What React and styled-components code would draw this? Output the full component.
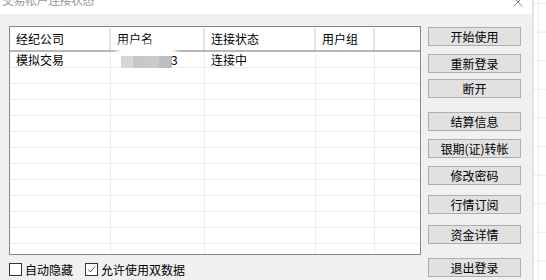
import styled, { createGlobalStyle } from "styled-components";

const GlobalStyle = createGlobalStyle`
  html, body {
    margin: 0;
    padding: 0;
    width: 546px;
    height: 280px;
    overflow: hidden;
    background-color: #ffffff;
    background-image:
      linear-gradient(to right, transparent 538px, #ebebeb 538px, #ebebeb 539px, transparent 539px),
      linear-gradient(to bottom, #ebebeb 1px, transparent 1px);
    background-size: 100% 100%, 100% 28.6px;
    background-position: 0 0, 0 3px;
    font-family: "Noto Sans CJK SC", "Microsoft YaHei", sans-serif;
    font-size: 12px;
    color: #000;
  }
`;

const Window = styled.div`
  width: 532px;
  height: 280px;
  background: #f0f0f0;
  border-right: 2px solid #e4e4e4;
  display: flex;
  flex-direction: column;
  overflow: hidden;
`;

const TitleBar = styled.div`
  height: 14px;
  background: #ffffff;
  display: flex;
  justify-content: space-between;
  align-items: flex-start;
  overflow: hidden;
  flex-shrink: 0;
`;

const Title = styled.span`
  margin-top: -8px;
  margin-left: 2px;
  font-size: 12px;
  line-height: 16px;
  color: #9a9a9a;
  letter-spacing: -0.5px;
`;

const CloseIcon = styled.svg`
  margin-top: -3px;
  margin-right: 9px;
`;

const Body = styled.div`
  display: flex;
  flex: 1;
`;

const LeftPane = styled.div`
  display: flex;
  flex-direction: column;
  padding: 12px 0 0 9px;
`;

const ListBox = styled.div`
  width: 410px;
  height: 227px;
  border: 1px solid #828790;
  background: #fff;
  overflow: hidden;
`;

const HeaderRow = styled.div`
  display: flex;
  height: 22px;
  margin-top: 1px;
  border-bottom: 2px solid #b8b8b8;
`;

const HeaderCell = styled.div`
  width: ${(p) => p.$w}px;
  flex-shrink: 0;
  box-sizing: border-box;
  padding-left: 6px;
  line-height: 22px;
  border-right: 2px solid ${(p) => (p.$last ? "transparent" : "#e3e3e3")};
  white-space: nowrap;
`;

const Row = styled.div`
  display: flex;
  height: 16px;
  border-bottom: 1px solid #ececec;
  box-sizing: border-box;
`;

const Cell = styled.div`
  width: ${(p) => p.$w}px;
  flex-shrink: 0;
  box-sizing: border-box;
  padding-left: 6px;
  line-height: 16px;
  border-right: 1px solid ${(p) => (p.$last ? "transparent" : "#ececec")};
  white-space: nowrap;
  display: flex;
  align-items: center;
`;

const Mosaic = styled.span`
  display: inline-flex;
  align-items: flex-end;
  margin-left: 4px;
  height: 16px;
  background: #fff;
  box-shadow: 0 -4px 6px 4px #ffffff;
`;

const Tile = styled.span`
  width: ${(p) => p.$w}px;
  height: 12px;
  margin-top: 4px;
  background: ${(p) => p.$c};
`;

const CheckRow = styled.div`
  display: flex;
  align-items: center;
  margin-top: 8px;
  height: 13px;
`;

const CheckItem = styled.label`
  display: flex;
  align-items: center;
  margin-right: ${(p) => p.$gap || 0}px;
  line-height: 13px;
`;

const Box = styled.span`
  width: 11px;
  height: 11px;
  border: 1px solid #333;
  background: #fff;
  margin-right: 3px;
  display: flex;
  align-items: center;
  justify-content: center;
`;

const ButtonColumn = styled.div`
  display: flex;
  flex-direction: column;
  padding: 13px 0 0 7px;
`;

const Button = styled.button`
  width: 93px;
  height: 19px;
  margin: ${(p) => p.$gap}px 0 0 0;
  padding: 0;
  background: #e1e1e1;
  border: 1px solid #adadad;
  border-radius: 0;
  font-family: "Noto Sans CJK SC", "Microsoft YaHei", sans-serif;
  font-size: 12px;
  line-height: 17px;
  color: #000;
`;

const columns = [
  { title: "经纪公司", w: 101 },
  { title: "用户名", w: 94 },
  { title: "连接状态", w: 111 },
  { title: "用户组", w: 59 },
  { title: "", w: 45, last: true },
];

const buttons = [
  { label: "开始使用", gap: 0 },
  { label: "重新登录", gap: 8 },
  { label: "断开", gap: 6 },
  { label: "结算信息", gap: 14 },
  { label: "银期(证)转帐", gap: 8 },
  { label: "修改密码", gap: 8 },
  { label: "行情订阅", gap: 10 },
  { label: "资金详情", gap: 11 },
  { label: "退出登录", gap: 14 },
];

const tiles = [
  { w: 12, c: "#d6d6d6" },
  { w: 11, c: "#c6c6c6" },
  { w: 15, c: "#cacaca" },
  { w: 13, c: "#bebebe" },
];

export default function App() {
  const emptyRows = Array.from({ length: 12 });

  return (
    <>
      <GlobalStyle />
      <Window>
        <TitleBar>
          <Title>交易帐户连接状态</Title>
          <CloseIcon width="10" height="10" viewBox="0 0 10 10">
            <path d="M0.5 0.5 L9.5 9.5 M9.5 0.5 L0.5 9.5" stroke="#8a8a8a" strokeWidth="1" />
          </CloseIcon>
        </TitleBar>
        <Body>
          <LeftPane>
            <ListBox>
              <HeaderRow>
                {columns.map((c, i) => (
                  <HeaderCell key={i} $w={c.w} $last={c.last}>
                    {c.title}
                  </HeaderCell>
                ))}
              </HeaderRow>
              <Row>
                <Cell $w={101}>模拟交易</Cell>
                <Cell $w={94}>
                  <Mosaic>
                    {tiles.map((t, i) => (
                      <Tile key={i} $w={t.w} $c={t.c} />
                    ))}
                  </Mosaic>
                  <span style={{ marginLeft: "-1px" }}>3</span>
                </Cell>
                <Cell $w={111}>连接中</Cell>
                <Cell $w={59} />
                <Cell $w={45} $last />
              </Row>
              {emptyRows.map((_, r) => (
                <Row key={r}>
                  {columns.map((c, i) => (
                    <Cell key={i} $w={c.w} $last={c.last} />
                  ))}
                </Row>
              ))}
            </ListBox>
            <CheckRow>
              <CheckItem $gap={12}>
                <Box />
                自动隐藏
              </CheckItem>
              <CheckItem>
                <Box>
                  <svg width="9" height="9" viewBox="0 0 9 9">
                    <path d="M1 4.5 L3.5 7 L8 1.5" fill="none" stroke="#555" strokeWidth="1" />
                  </svg>
                </Box>
                允许使用双数据
              </CheckItem>
            </CheckRow>
          </LeftPane>
          <ButtonColumn>
            {buttons.map((b) => (
              <Button key={b.label} $gap={b.gap}>
                {b.label}
              </Button>
            ))}
          </ButtonColumn>
        </Body>
      </Window>
    </>
  );
}
